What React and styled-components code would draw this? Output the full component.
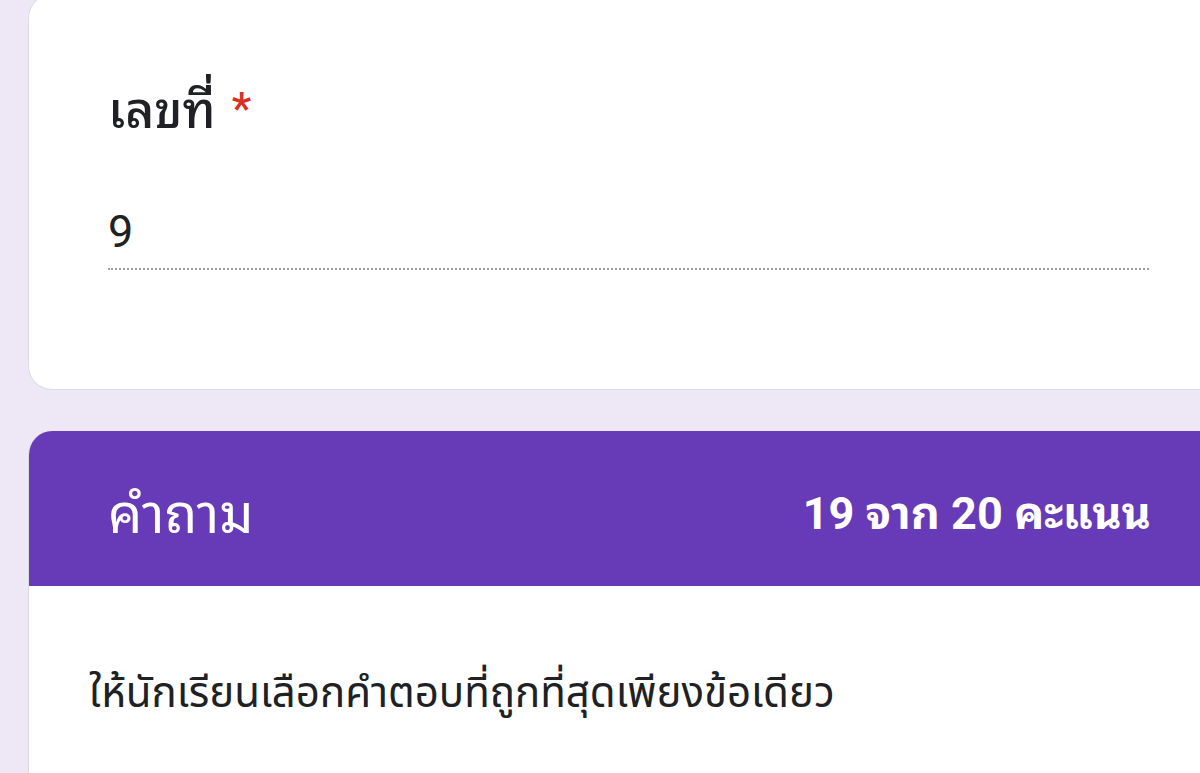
import styled, { createGlobalStyle } from "styled-components";

const GlobalStyle = createGlobalStyle`
  html, body {
    margin: 0;
    padding: 0;
    background: #ede7f6;
    overflow: hidden;
  }
  body {
    font-family: Roboto, "Noto Sans Thai Looped", "Noto Sans Thai", "Noto Sans", sans-serif;
  }
`;

const Page = styled.div`
  width: 1200px;
  height: 773px;
  overflow: hidden;
  padding-left: 28px;
  box-sizing: border-box;
  display: flex;
  flex-direction: column;
  gap: 41px;
`;

const Card = styled.section`
  margin-top: -6px;
  margin-right: -40px;
  background: #fff;
  border: 1px solid #dadce0;
  border-radius: 24px;
  padding: 86px 90px 119px 79px;
`;

const Label = styled.div`
  font-size: 50px;
  font-weight: 500;
  color: #202124;
  line-height: 1.2;
  display: flex;
  align-items: flex-start;
  gap: 16px;
`;

const Required = styled.span`
  color: #d93025;
  font-size: 44px;
  line-height: 1.3;
`;

const Answer = styled.div`
  margin-top: 64px;
  font-size: 45px;
  color: #202124;
  padding-bottom: 9px;
  border-bottom: 2px dotted #9aa0a6;
  line-height: 1.2;
`;

const Section = styled.section`
  margin-right: -40px;
  flex: 1;
  background: #fff;
  border-left: 1px solid #dadce0;
  border-top-left-radius: 24px;
  overflow: hidden;
`;

const Header = styled.header`
  height: 155px;
  background: #673ab7;
  color: #fff;
  display: flex;
  align-items: center;
  justify-content: space-between;
  padding: 0 89px 0 79px;
`;

const HeaderTitle = styled.div`
  font-size: 54px;
  font-weight: 400;
`;

const Score = styled.div`
  font-size: 45px;
  font-weight: 700;
`;

const Description = styled.p`
  margin: 0;
  padding: 76px 0 0 60px;
  font-family: "Noto Sans Thai", "Noto Sans", sans-serif;
  font-size: 42px;
  color: #202124;
`;

export default function App() {
  return (
    <>
      <GlobalStyle />
      <Page>
        <Card>
          <Label>
            เลขที่ <Required>*</Required>
          </Label>
          <Answer>9</Answer>
        </Card>
        <Section>
          <Header>
            <HeaderTitle>คำถาม</HeaderTitle>
            <Score>19 จาก 20 คะแนน</Score>
          </Header>
          <Description>ให้นักเรียนเลือกคำตอบที่ถูกที่สุดเพียงข้อเดียว</Description>
        </Section>
      </Page>
    </>
  );
}
